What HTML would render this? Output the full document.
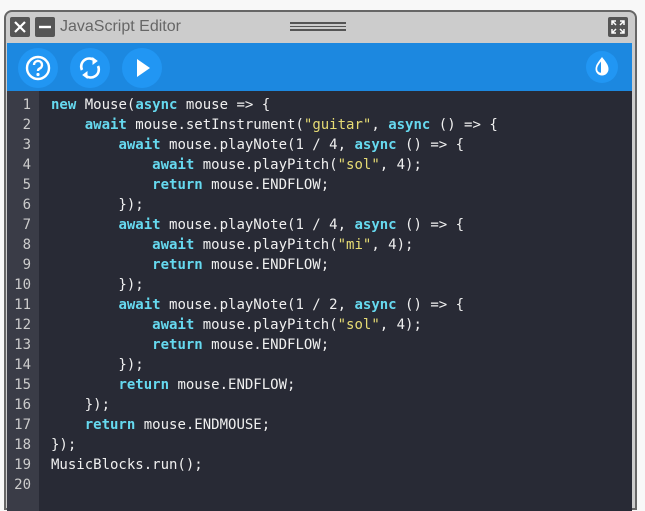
<!DOCTYPE html>
<html><head><style>
html,body{margin:0;padding:0;background:#f8f8f8;width:645px;height:504px;overflow:hidden}
.win{position:absolute;left:4px;top:10px;width:633px;height:500px;border:2px solid #666;border-radius:8px 8px 0 0;background:#ccc;box-sizing:border-box}
.tb{position:absolute;width:20px;height:20px;background:#555;border-radius:2px;top:5px}
.title{position:absolute;left:54px;top:6px;font:16px "Liberation Sans",sans-serif;color:#666}
.grip{position:absolute;left:284px;top:10px;width:56px;height:9px;border-top:2px solid #555;border-bottom:2px solid #555;box-sizing:border-box}
.grip:after{content:"";position:absolute;left:0;right:0;top:2px;border-top:1px solid #555}
.bar{position:absolute;left:1px;top:31px;width:625px;height:48px;background:#1c88e0}
.btn{position:absolute;top:5px;width:40px;height:40px;border-radius:50%;background:#2196f3}
.code{position:absolute;left:1px;top:79px;width:625px;height:420px;background:#282a35}
.gut{position:absolute;left:0;top:0;width:32px;height:100%;background:#3a3c47}
.ln{position:absolute;left:0;width:24px;text-align:right;color:#ccc;font:14px "DejaVu Sans Mono",monospace;line-height:20px}
pre{position:absolute;left:44px;top:4px;margin:0;font:14px "DejaVu Sans Mono",monospace;line-height:20px;color:#f0f0f0}
.k{color:#66d9ef;font-weight:bold}.s{color:#e6db74}
</style></head><body>
<div class="win">
<div class="tb" style="left:4px"><svg width="20" height="20"><path d="M5 5L15 15M15 5L5 15" stroke="#fff" stroke-width="2.2"/></svg></div>
<div class="tb" style="left:29px"><svg width="20" height="20"><path d="M4 10H16" stroke="#fff" stroke-width="2.4"/></svg></div>
<div class="title">JavaScript Editor</div>
<div class="grip"></div>
<div class="tb" style="left:602px"><svg width="20" height="20" fill="none" stroke="#fff" stroke-width="1.5"><path d="M4 8V4H8M4 4L8 8M12 4H16V8M16 4L12 8M4 12V16H8M4 16L8 12M16 12V16H12M16 16L12 12"/></svg></div>
<div class="bar">
<div class="btn" style="left:11px"><svg width="40" height="40"><circle cx="20" cy="20" r="11" fill="none" stroke="#fff" stroke-width="2.4"/><path d="M16 17a4 4 0 1 1 5.5 3.6c-1 .5-1.5 1-1.5 2.4" fill="none" stroke="#fff" stroke-width="2.4"/><circle cx="20" cy="26.5" r="1.6" fill="#fff"/></svg></div>
<div class="btn" style="left:63px"><svg width="40" height="40" fill="none" stroke="#fff" stroke-width="2.6"><path d="M12 22a8 8 0 0 1 13-9"/><path d="M28 18a8 8 0 0 1-13 9"/><path d="M23 10l4 3-4 3z" fill="#fff" stroke-width="1"/><path d="M17 30l-4-3 4-3z" fill="#fff" stroke-width="1"/></svg></div>
<div class="btn" style="left:115px"><svg width="40" height="40"><path d="M15 11L28 20L15 29Z" fill="#fff"/></svg></div>
<div class="btn" style="left:579px;width:32px;height:32px;top:8px"><svg width="32" height="32"><path d="M16 6C13 10 9.5 13.5 9.5 18a6.5 6.5 0 0 0 13 0c0-4.5-3.5-8-6.5-12z" fill="#fff"/><path d="M15 10.5c-2 2.7-3.8 4.8-3.8 7.5a3.8 3.8 0 0 0 3.8 3.8z" fill="#2196f3"/></svg></div>
</div>
<div class="code">
<div class="gut"></div>
<div class="ln" style="top:4px">1<br>2<br>3<br>4<br>5<br>6<br>7<br>8<br>9<br>10<br>11<br>12<br>13<br>14<br>15<br>16<br>17<br>18<br>19<br>20</div>
<pre><span class="k">new</span> Mouse(<span class="k">async</span> mouse =&gt; {
    <span class="k">await</span> mouse.setInstrument(<span class="s">"guitar"</span>, <span class="k">async</span> () =&gt; {
        <span class="k">await</span> mouse.playNote(1 / 4, <span class="k">async</span> () =&gt; {
            <span class="k">await</span> mouse.playPitch(<span class="s">"sol"</span>, 4);
            <span class="k">return</span> mouse.ENDFLOW;
        });
        <span class="k">await</span> mouse.playNote(1 / 4, <span class="k">async</span> () =&gt; {
            <span class="k">await</span> mouse.playPitch(<span class="s">"mi"</span>, 4);
            <span class="k">return</span> mouse.ENDFLOW;
        });
        <span class="k">await</span> mouse.playNote(1 / 2, <span class="k">async</span> () =&gt; {
            <span class="k">await</span> mouse.playPitch(<span class="s">"sol"</span>, 4);
            <span class="k">return</span> mouse.ENDFLOW;
        });
        <span class="k">return</span> mouse.ENDFLOW;
    });
    <span class="k">return</span> mouse.ENDMOUSE;
});
MusicBlocks.run();
</pre>
</div>
</div>
</body></html>
